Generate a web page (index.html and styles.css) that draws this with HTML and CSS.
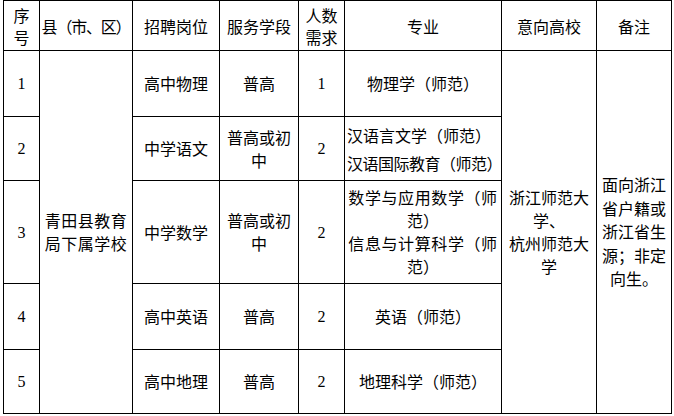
FILE: index.html
```html
<!DOCTYPE html>
<html lang="zh-CN">
<head>
<meta charset="utf-8">
<link rel="stylesheet" href="styles.css">
</head>
<body>
<table class="grid">
  <colgroup>
    <col class="c-no"><col class="c-area"><col class="c-post"><col class="c-stage"><col class="c-num"><col class="c-major"><col class="c-school"><col class="c-note">
  </colgroup>
  <tr class="r-head">
    <td>序<br>号</td>
    <td class="nw squeeze">县（市、区）</td>
    <td>招聘岗位</td>
    <td>服务学段</td>
    <td>人数<br>需求</td>
    <td>专业</td>
    <td>意向高校</td>
    <td>备注</td>
  </tr>
  <tr class="r1">
    <td class="num">1</td>
    <td rowspan="5"><span class="spread">青田县教育</span><br><span class="spread">局下属学校</span></td>
    <td>高中物理</td>
    <td>普高</td>
    <td class="num">1</td>
    <td>物理学（师范）</td>
    <td rowspan="5">浙江师范大<br>学、<br>杭州师范大<br>学</td>
    <td rowspan="5" class="note">面向浙江<br>省户籍或<br>浙江省生<br>源；非定<br>向生。</td>
  </tr>
  <tr class="r2">
    <td class="num">2</td>
    <td>中学语文</td>
    <td>普高或初<br>中</td>
    <td class="num">2</td>
    <td class="nw left tall">汉语言文学（师范）<br><span class="tight">汉语国际教育（师范）</span></td>
  </tr>
  <tr class="r3">
    <td class="num">3</td>
    <td>中学数学</td>
    <td>普高或初<br>中</td>
    <td class="num">2</td>
    <td class="nw"><span class="wide">数学与应用数学（师</span><br>范）<br><span class="wide">信息与计算科学（师</span><br>范）</td>
  </tr>
  <tr class="r4">
    <td class="num">4</td>
    <td>高中英语</td>
    <td>普高</td>
    <td class="num">2</td>
    <td>英语（师范）</td>
  </tr>
  <tr class="r5">
    <td class="num">5</td>
    <td>高中地理</td>
    <td>普高</td>
    <td class="num">2</td>
    <td>地理科学（师范）</td>
  </tr>
</table>
</body>
</html>
```
FILE: styles.css
```css
html, body {
  margin: 0;
  padding: 0;
  background: #ffffff;
}
body {
  font-family: "Noto Sans CJK SC", "Noto Sans", sans-serif;
  font-size: 16px;
  color: #000;
}
.grid {
  border-collapse: collapse;
  table-layout: fixed;
  width: 669px;
  margin: 0 0 0 3px;
}
.grid td {
  border: 1px solid #000;
  padding: 0;
  text-align: center;
  vertical-align: middle;
  line-height: 23px;
  font-weight: 400;
  overflow: hidden;
}
.grid .r-head td { line-height: 22px; height: 49px; }
.c-no { width: 36px; }
.c-area { width: 93px; }
.c-post { width: 87px; }
.c-stage { width: 79px; }
.c-num { width: 46px; }
.c-major { width: 157px; }
.c-school { width: 95px; }
.c-note { width: 75px; }
.nw { white-space: nowrap; }
.squeeze { letter-spacing: -1.2px; }
.grid td.left { text-align: left; padding-left: 2px; }
.grid td.tall { line-height: 28px; }
.tight { letter-spacing: -0.5px; }
.wide { letter-spacing: 0.6px; }
.spread { letter-spacing: 0.5px; }
.grid td.note { line-height: 23.5px; }
.grid td.num { font-family: "Liberation Serif", serif; font-size: 16px; }
.r1 td { height: 65px; }
.r2 td { height: 63px; }
.r3 td { height: 102px; }
.r4 td { height: 65px; }
.r5 td { height: 63px; }
```
